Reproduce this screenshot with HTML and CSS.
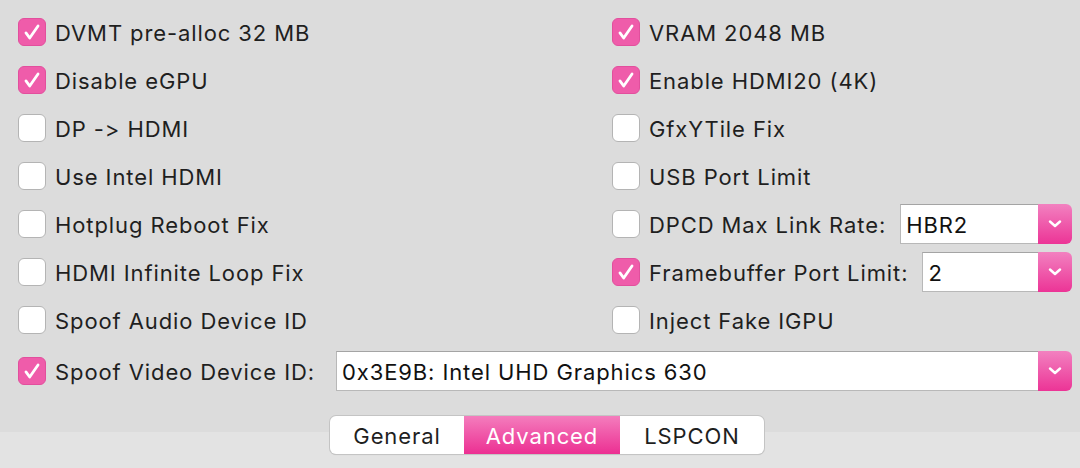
FILE: index.html
```html
<!DOCTYPE html>
<html>
<head>
<meta charset="utf-8">
<link rel="stylesheet" href="styles.css">
</head>
<body>
<div class="panel">
  <div class="grid">
    <div class="opt on"><span class="box"><svg viewBox="0 0 28 28"><polyline points="7.5,15 11.5,20.5 20.5,7.5"/></svg></span><span class="txt">DVMT pre-alloc 32 MB</span></div>
    <div class="opt on"><span class="box"><svg viewBox="0 0 28 28"><polyline points="7.5,15 11.5,20.5 20.5,7.5"/></svg></span><span class="txt">VRAM 2048 MB</span></div>
    <div class="opt on"><span class="box"><svg viewBox="0 0 28 28"><polyline points="7.5,15 11.5,20.5 20.5,7.5"/></svg></span><span class="txt">Disable eGPU</span></div>
    <div class="opt on"><span class="box"><svg viewBox="0 0 28 28"><polyline points="7.5,15 11.5,20.5 20.5,7.5"/></svg></span><span class="txt">Enable HDMI20 (4K)</span></div>
    <div class="opt"><span class="box"></span><span class="txt">DP -&gt; HDMI</span></div>
    <div class="opt"><span class="box"></span><span class="txt">GfxYTile Fix</span></div>
    <div class="opt"><span class="box"></span><span class="txt">Use Intel HDMI</span></div>
    <div class="opt"><span class="box"></span><span class="txt">USB Port Limit</span></div>
    <div class="opt"><span class="box"></span><span class="txt">Hotplug Reboot Fix</span></div>
    <div class="opt"><span class="box"></span><span class="txt">DPCD Max Link Rate:</span>
      <div class="select sel-dpcd"><span class="value">HBR2</span><span class="arrow"><svg viewBox="0 0 14 8"><polyline points="2,1.5 7,6 12,1.5"/></svg></span></div>
    </div>
    <div class="opt"><span class="box"></span><span class="txt">HDMI Infinite Loop Fix</span></div>
    <div class="opt on"><span class="box"><svg viewBox="0 0 28 28"><polyline points="7.5,15 11.5,20.5 20.5,7.5"/></svg></span><span class="txt">Framebuffer Port Limit:</span>
      <div class="select sel-fb"><span class="value">2</span><span class="arrow"><svg viewBox="0 0 14 8"><polyline points="2,1.5 7,6 12,1.5"/></svg></span></div>
    </div>
    <div class="opt"><span class="box"></span><span class="txt">Spoof Audio Device ID</span></div>
    <div class="opt"><span class="box"></span><span class="txt">Inject Fake IGPU</span></div>
  </div>
  <div class="opt spoof on"><span class="box"><svg viewBox="0 0 28 28"><polyline points="7.5,15 11.5,20.5 20.5,7.5"/></svg></span><span class="txt">Spoof Video Device ID:</span>
    <div class="select sel-spoof"><span class="value">0x3E9B: Intel UHD Graphics 630</span><span class="arrow"><svg viewBox="0 0 14 8"><polyline points="2,1.5 7,6 12,1.5"/></svg></span></div>
  </div>
  <div class="footer">
    <div class="seg">
      <span class="tab t-general">General</span>
      <span class="tab t-adv active">Advanced</span>
      <span class="tab t-lsp">LSPCON</span>
    </div>
  </div>
</div>
</body>
</html>
```
FILE: styles.css
```css
html, body {
  margin: 0;
  padding: 0;
  background: #dcdcdc;
  width: 1080px;
  height: 468px;
  overflow: hidden;
}
.panel {
  font-family: "Inter", "Liberation Sans", sans-serif;
  font-size: 22px;
  letter-spacing: 0.9px;
  font-feature-settings: "calt" 0, "liga" 0;
  font-variant-ligatures: none;
  color: #1f1f1f;
  padding-top: 8px;
}
.grid {
  display: grid;
  grid-template-columns: 594px 1fr;
  grid-auto-rows: 48px;
  padding-left: 18px;
  padding-right: 8px;
}
.opt {
  display: flex;
  align-items: center;
}
.box {
  width: 28px;
  height: 28px;
  box-sizing: border-box;
  border-radius: 6px;
  background: #ffffff;
  border: 1px solid #b4b4b4;
  flex: none;
  display: flex;
}
.opt.on .box {
  background: #ef5caa;
  border-color: #e24f9d;
}
.box svg {
  width: 26px;
  height: 26px;
}
.box polyline {
  fill: none;
  stroke: #ffffff;
  stroke-width: 3;
  stroke-linecap: round;
  stroke-linejoin: round;
}
.txt {
  margin-left: 9px;
  padding-top: 2px;
  white-space: nowrap;
}
.select {
  flex: 1;
  height: 40px;
  display: flex;
  margin-left: 14px;
}
.value {
  flex: 1;
  background: #ffffff;
  border: 1px solid #b8b8b8;
  border-top-color: #a4a4a4;
  border-right: none;
  display: flex;
  align-items: center;
  padding-left: 5px;
  padding-top: 2px;
  color: #111;
  letter-spacing: 0.9px;
}
.arrow {
  width: 34px;
  flex: none;
  border-radius: 0 6px 6px 0;
  background: linear-gradient(#f281c0, #ec3496);
  display: flex;
  align-items: center;
  justify-content: center;
}
.arrow svg {
  width: 14px;
  height: 8px;
}
.arrow polyline {
  fill: none;
  stroke: #ffffff;
  stroke-width: 2.4;
  stroke-linecap: round;
  stroke-linejoin: round;
}
.spoof {
  padding-left: 18px;
  padding-right: 8px;
  height: 48px;
  margin-top: 3px;
}
.spoof .select {
  margin-left: 21px;
}
.footer {
  margin-top: 21px;
  height: 60px;
  background: linear-gradient(#dcdcdc 0, #dcdcdc 16px, #e3e3e3 16px);
  display: flex;
  justify-content: center;
  align-items: flex-start;
  padding-left: 14px;
}
.seg {
  display: flex;
  height: 38px;
  background: #ffffff;
  border-radius: 6px;
  box-shadow: 0 0 0 1px #c4c4c4, 0 1px 1px rgba(0,0,0,0.15);
  overflow: hidden;
}
.tab {
  display: flex;
  align-items: center;
  justify-content: center;
  padding-top: 2px;
  color: #1f1f1f;
}
.t-general { width: 134px; }
.t-adv { width: 156px; }
.t-lsp { width: 144px; }
.tab.active {
  background: linear-gradient(#f47dbd, #ec2f92);
  color: #ffffff;
}
```
